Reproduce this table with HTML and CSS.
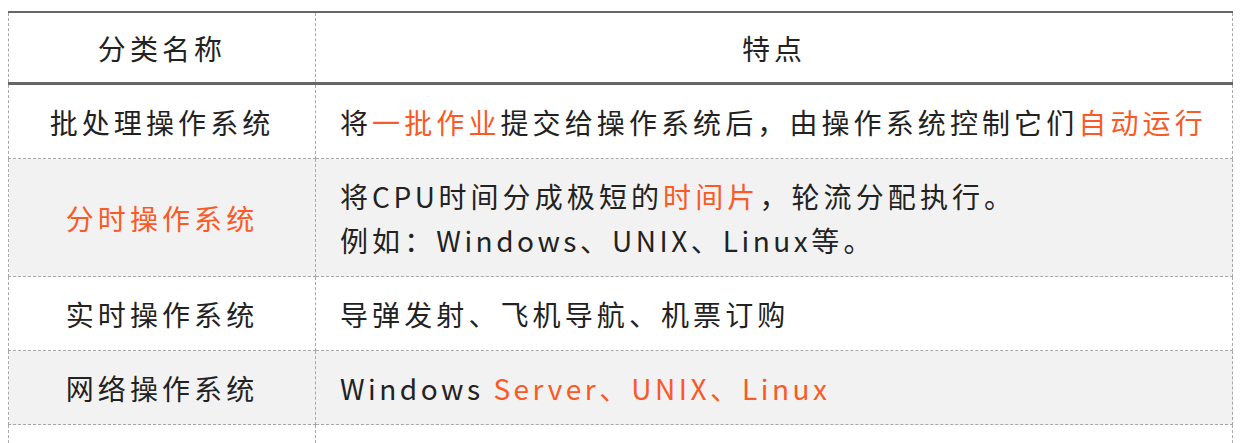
FILE: index.html
```html
<!DOCTYPE html>
<html lang="zh">
<head>
<meta charset="utf-8">
<link rel="stylesheet" href="styles.css">
</head>
<body>
<table class="os-table">
  <thead>
    <tr>
      <th class="col-name">分类名称</th>
      <th class="col-desc">特点</th>
    </tr>
  </thead>
  <tbody>
    <tr>
      <td class="name">批处理操作系统</td>
      <td class="desc">将<span class="hl">一批作业</span>提交给操作系统后，由操作系统控制它们<span class="hl">自动运行</span></td>
    </tr>
    <tr class="alt">
      <td class="name hl">分时操作系统</td>
      <td class="desc">将<span class="en">CPU</span>时间分成极短的<span class="hl">时间片</span>，轮流分配执行。<br>例如：<span class="en">Windows</span>、<span class="en">UNIX</span>、<span class="en">Linux</span>等。</td>
    </tr>
    <tr>
      <td class="name">实时操作系统</td>
      <td class="desc">导弹发射、飞机导航、机票订购</td>
    </tr>
    <tr class="alt">
      <td class="name">网络操作系统</td>
      <td class="desc"><span class="en">Windows </span><span class="hl"><span class="en">Server</span>、<span class="en">UNIX</span>、<span class="en">Linux</span></span></td>
    </tr>
    <tr>
      <td class="name">&nbsp;</td>
      <td class="desc">&nbsp;</td>
    </tr>
  </tbody>
</table>
</body>
</html>
```

FILE: styles.css
```css
html, body {
  background: #ffffff;
}
body {
  margin: 8px;
  font-family: "Noto Sans CJK SC", "Noto Sans", sans-serif;
  color: #222222;
}
.os-table {
  margin-top: 3px;
  width: 100%;
  border-collapse: collapse;
  table-layout: fixed;
  font-size: 28px;
  line-height: 44px;
  letter-spacing: 4.1px;
}
.os-table th,
.os-table td {
  box-sizing: border-box;
  border: 1px dashed #a8a8a8;
  padding: 15px 2px 14px 24px;
  font-weight: 400;
  vertical-align: middle;
  white-space: nowrap;
}
.os-table th.col-name {
  width: 307px;
}
.os-table thead th {
  border-top: 2px solid #666666;
  border-bottom: 3px solid #666666;
  text-align: center;
  padding: 13px 2px 12px;
}
.os-table td.name {
  text-align: center;
  padding-left: 2px;
}
.os-table td.desc {
  text-align: left;
}
.os-table tr.alt td {
  background: #f2f2f2;
}
.en {
  letter-spacing: 3.5px;
}
.hl {
  color: #fa5a26;
}
```
